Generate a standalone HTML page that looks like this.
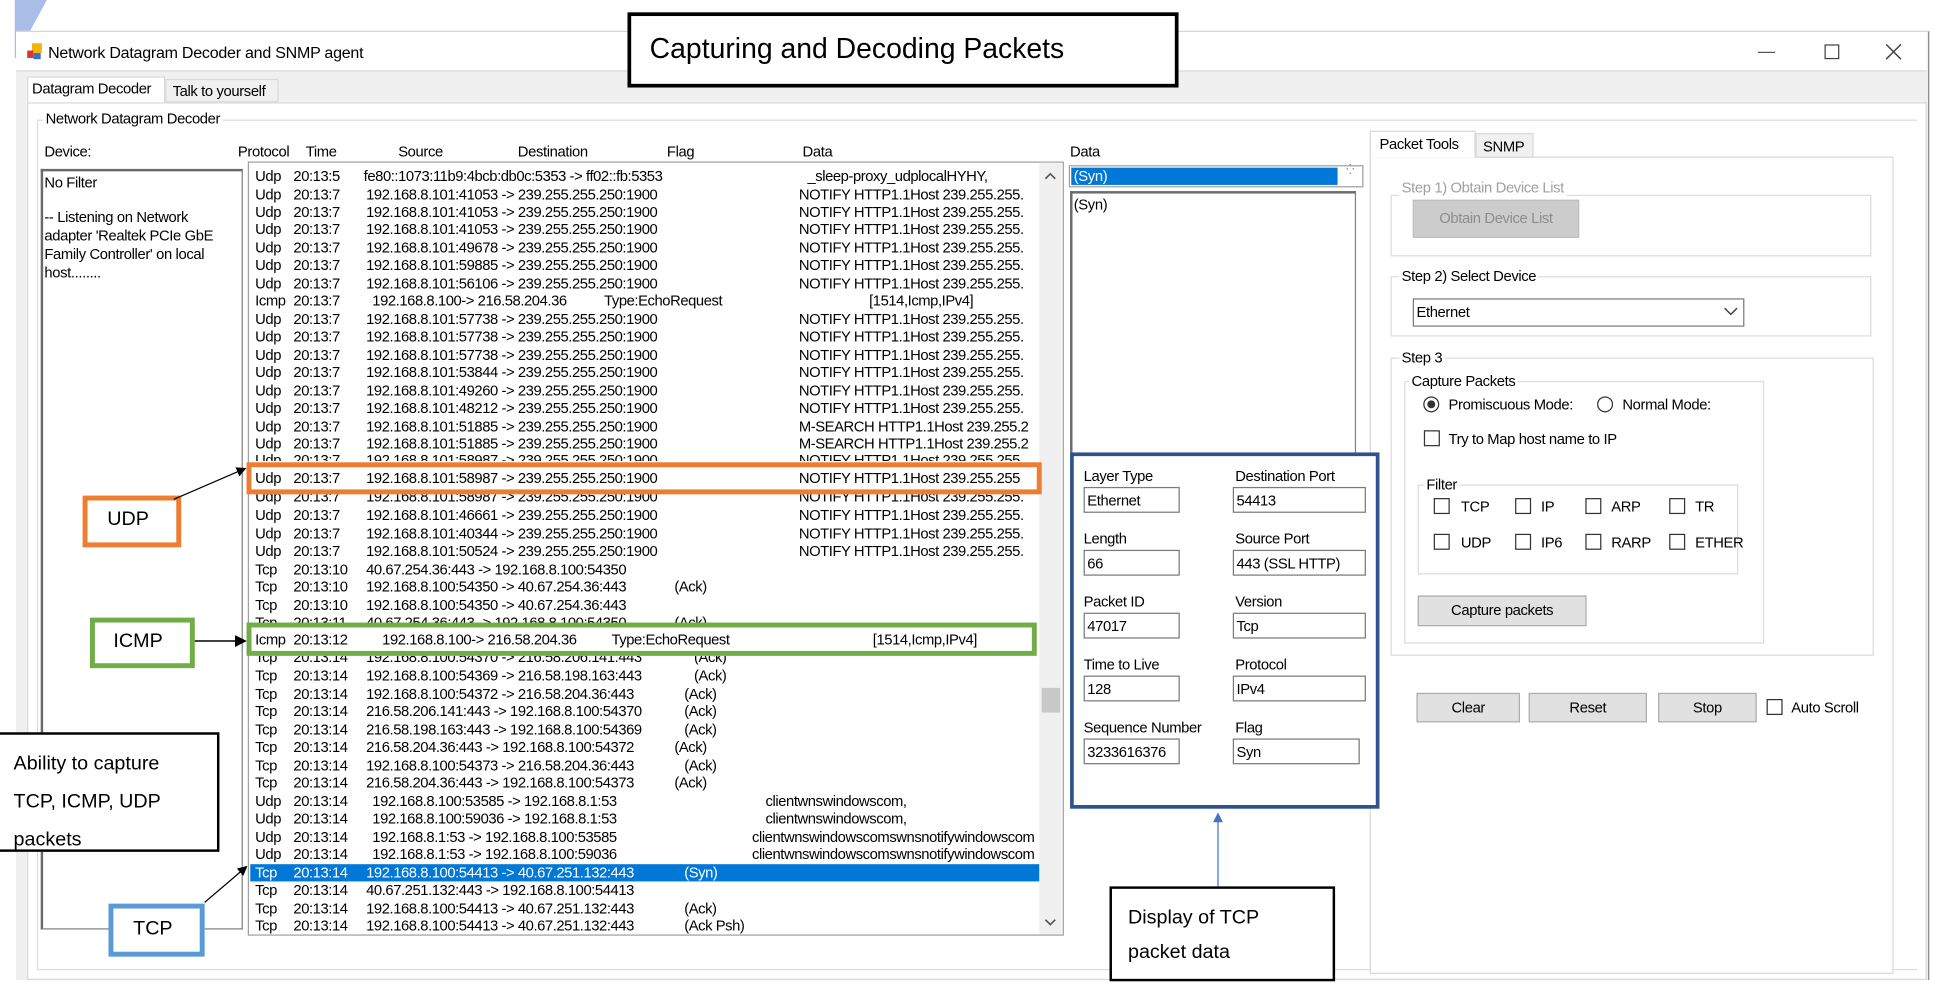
<!DOCTYPE html>
<html><head><meta charset="utf-8"><style>
*{margin:0;padding:0;box-sizing:border-box}
html,body{width:1933px;height:987px;overflow:hidden;background:#fff}
#s{position:absolute;left:0;top:0;width:1568px;height:801px;transform:scale(1.23278);transform-origin:0 0;font-family:"Liberation Sans",Arial,sans-serif;font-size:12px;color:#000}
.a{position:absolute}
.l{position:absolute;white-space:nowrap;font-size:12px;letter-spacing:-0.3px}
.gb{position:absolute;border:1px solid #dcdcdc}
.gl{position:absolute;background:#fff;padding:0 2px;white-space:nowrap;font-size:12px;letter-spacing:-0.3px}
.tb{position:absolute;border:1px solid #7a7a7a;background:#fff;font-size:12px;padding:3px 2px;letter-spacing:-0.3px;white-space:nowrap}
.btn{position:absolute;background:#e1e1e1;border:1px solid #adadad;text-align:center;font-size:12px;letter-spacing:-0.3px;white-space:nowrap}
.cb{position:absolute;width:13px;height:13px;border:1px solid #333;background:#fff}
.rw{position:absolute;left:203px;width:640px;height:14.5px;line-height:14px;font-size:12px;letter-spacing:-0.35px;white-space:nowrap}
.rw span{position:absolute;top:0}
.p{left:4px}.t{left:35px}.s{left:94px}.f{left:344px}.d{left:445px}
.sel{background:#0078d7;color:#fff}
.ann{position:absolute;background:#fff;font-family:"Liberation Sans",sans-serif;font-size:16px;white-space:nowrap}
</style></head><body><div id="s">

<svg class="a" style="left:0;top:0" width="60" height="60"><polygon points="12,0 38,0 12,48" fill="#a9bde8"/></svg>

<div class="a" style="left:13px;top:25px;width:1552px;height:770px;border-top:1px solid #d6d6d6;border-right:1px solid #888;background:#f0f0f0"></div>
<div class="a" style="left:13px;top:26px;width:1550px;height:32px;background:#fff;border-bottom:1px solid #d8d8d8"></div>
<svg class="a" style="left:22px;top:35px" width="13" height="14"><rect x="4" y="0" width="8" height="8" fill="#f2b600"/><rect x="0" y="6" width="5" height="6" fill="#d33"/><rect x="5" y="8" width="6" height="5" fill="#3a6fd0"/></svg>
<div class="l" style="left:39px;top:35px;font-size:13px;letter-spacing:-0.2px">Network Datagram Decoder and SNMP agent</div>
<div class="a" style="left:1426px;top:42px;width:14px;height:1px;background:#555"></div>
<div class="a" style="left:1480px;top:36px;width:12px;height:12px;border:1px solid #444"></div>
<svg class="a" style="left:1529px;top:35px" width="14" height="14"><path d="M1 1L13 13M13 1L1 13" stroke="#444" stroke-width="1.2"/></svg>

<div class="a" style="left:22px;top:62px;width:112px;height:22px;background:#fff;border:1px solid #d9d9d9;border-bottom:none"></div>
<div class="l" style="left:26px;top:65px">Datagram Decoder</div>
<div class="a" style="left:134px;top:64px;width:92px;height:19px;background:#f0f0f0;border:1px solid #d9d9d9"></div>
<div class="l" style="left:140px;top:67px">Talk to yourself</div>
<div class="a" style="left:22px;top:83px;width:1541px;height:712px;background:#fff;border:1px solid #d9d9d9"></div>

<div class="gb" style="left:30px;top:97px;width:1525px;height:690px;border-right:none"></div>
<div class="gl" style="left:35px;top:89px">Network Datagram Decoder</div>

<div class="l" style="left:36px;top:116px">Device:</div>
<div class="l" style="left:193px;top:116px">Protocol</div>
<div class="l" style="left:248px;top:116px">Time</div>
<div class="l" style="left:323px;top:116px">Source</div>
<div class="l" style="left:420px;top:116px">Destination</div>
<div class="l" style="left:541px;top:116px">Flag</div>
<div class="l" style="left:651px;top:116px">Data</div>
<div class="l" style="left:868px;top:116px">Data</div>

<!-- Right panel (before data panel so blue box overlays it) -->
<div class="a" style="left:1111px;top:127px;width:425px;height:663px;border:1px solid #d9d9d9;background:#fff"></div>
<div class="a" style="left:1111px;top:106px;width:86px;height:22px;background:#fff;border:1px solid #d9d9d9;border-bottom:none"></div>
<div class="l" style="left:1119px;top:110px">Packet Tools</div>
<div class="a" style="left:1197px;top:108px;width:47px;height:20px;background:#f0f0f0;border:1px solid #d9d9d9"></div>
<div class="l" style="left:1203px;top:112px">SNMP</div>

<div class="gb" style="left:1128px;top:158px;width:390px;height:50px"></div>
<div class="gl" style="left:1135px;top:145px;color:#a0a0a0">Step 1) Obtain Device List</div>
<div class="btn" style="left:1146px;top:162px;width:135px;height:31px;line-height:29px;color:#8d8d8d;background:#cccccc;border-color:#bfbfbf">Obtain Device List</div>

<div class="gb" style="left:1128px;top:224px;width:390px;height:49px"></div>
<div class="gl" style="left:1135px;top:217px">Step 2) Select Device</div>
<div class="tb" style="left:1146px;top:242px;width:269px;height:23px;border-color:#7a7a7a">Ethernet</div>
<svg class="a" style="left:1398px;top:249px" width="12" height="8"><path d="M1 1L6 6L11 1" stroke="#444" stroke-width="1.2" fill="none"/></svg>

<div class="gb" style="left:1128px;top:290px;width:392px;height:242px"></div>
<div class="gl" style="left:1135px;top:283px">Step 3</div>
<div class="gb" style="left:1139px;top:309px;width:292px;height:213px"></div>
<div class="gl" style="left:1143px;top:302px">Capture Packets</div>
<svg class="a" style="left:1154px;top:321px" width="14" height="14"><circle cx="7" cy="7" r="6" fill="#fff" stroke="#333"/><circle cx="7" cy="7" r="3.2" fill="#333"/></svg>
<div class="l" style="left:1175px;top:321px">Promiscuous Mode:</div>
<svg class="a" style="left:1295px;top:321px" width="14" height="14"><circle cx="7" cy="7" r="6" fill="#fff" stroke="#333"/></svg>
<div class="l" style="left:1316px;top:321px">Normal Mode:</div>
<div class="cb" style="left:1155px;top:349px"></div><div class="l" style="left:1175px;top:349px">Try to Map host name to IP</div>

<div class="gb" style="left:1150px;top:393px;width:260px;height:73px"></div>
<div class="gl" style="left:1155px;top:386px">Filter</div>
<div class="cb" style="left:1163px;top:404px"></div><div class="l" style="left:1185px;top:404px">TCP</div>
<div class="cb" style="left:1229px;top:404px"></div><div class="l" style="left:1250px;top:404px">IP</div>
<div class="cb" style="left:1286px;top:404px"></div><div class="l" style="left:1307px;top:404px">ARP</div>
<div class="cb" style="left:1354px;top:404px"></div><div class="l" style="left:1375px;top:404px">TR</div>
<div class="cb" style="left:1163px;top:433px"></div><div class="l" style="left:1185px;top:433px">UDP</div>
<div class="cb" style="left:1229px;top:433px"></div><div class="l" style="left:1250px;top:433px">IP6</div>
<div class="cb" style="left:1286px;top:433px"></div><div class="l" style="left:1307px;top:433px">RARP</div>
<div class="cb" style="left:1354px;top:433px"></div><div class="l" style="left:1375px;top:433px">ETHER</div>
<div class="btn" style="left:1150px;top:483px;width:137px;height:25px;line-height:23px">Capture packets</div>

<div class="btn" style="left:1149px;top:562px;width:84px;height:24px;line-height:22px">Clear</div>
<div class="btn" style="left:1240px;top:562px;width:96px;height:24px;line-height:22px">Reset</div>
<div class="btn" style="left:1345px;top:562px;width:80px;height:24px;line-height:22px">Stop</div>
<div class="cb" style="left:1433px;top:567px"></div><div class="l" style="left:1453px;top:567px">Auto Scroll</div>

<!-- device list -->
<div class="a" style="left:33px;top:137px;width:164px;height:617px;border:1px solid #828282;border-top:2px solid #6a6a6a;border-left:2px solid #6a6a6a;background:#fff"></div>
<div class="l" style="left:36px;top:141px">No Filter</div>
<div class="l" style="left:36px;top:169px;line-height:15px"> -- Listening on Network<br>adapter 'Realtek PCIe GbE<br>Family Controller' on local<br>host........</div>

<!-- packet list -->
<div class="a" style="left:201px;top:131px;width:662px;height:628px;border:1px solid #a0a0a0;background:#fff"></div>
<div class="a" style="left:843px;top:132px;width:18px;height:626px;background:#f0f0f0"></div>
<div class="a" style="left:845px;top:558px;width:15px;height:20px;background:#c8c8c8"></div>
<svg class="a" style="left:846px;top:138px" width="12" height="10"><path d="M2 7L6 3L10 7" stroke="#555" stroke-width="1.3" fill="none"/></svg>
<svg class="a" style="left:846px;top:743px" width="12" height="10"><path d="M2 3L6 7L10 3" stroke="#555" stroke-width="1.3" fill="none"/></svg>

<div class="rw" style="top:136px"><span class="p">Udp</span><span class="t">20:13:5</span><span class="s" style="left:92px">fe80::1073:11b9:4bcb:db0c:5353 -> ff02::fb:5353</span><span class="d" style="left:452px">_sleep-proxy_udplocalHYHY,</span></div>
<div class="rw" style="top:150.5px"><span class="p">Udp</span><span class="t">20:13:7</span><span class="s">192.168.8.101:41053 -> 239.255.255.250:1900</span><span class="d">NOTIFY  HTTP1.1Host 239.255.255.</span></div>
<div class="rw" style="top:165px"><span class="p">Udp</span><span class="t">20:13:7</span><span class="s">192.168.8.101:41053 -> 239.255.255.250:1900</span><span class="d">NOTIFY  HTTP1.1Host 239.255.255.</span></div>
<div class="rw" style="top:179.4px"><span class="p">Udp</span><span class="t">20:13:7</span><span class="s">192.168.8.101:41053 -> 239.255.255.250:1900</span><span class="d">NOTIFY  HTTP1.1Host 239.255.255.</span></div>
<div class="rw" style="top:193.9px"><span class="p">Udp</span><span class="t">20:13:7</span><span class="s">192.168.8.101:49678 -> 239.255.255.250:1900</span><span class="d">NOTIFY  HTTP1.1Host 239.255.255.</span></div>
<div class="rw" style="top:208.4px"><span class="p">Udp</span><span class="t">20:13:7</span><span class="s">192.168.8.101:59885 -> 239.255.255.250:1900</span><span class="d">NOTIFY  HTTP1.1Host 239.255.255.</span></div>
<div class="rw" style="top:222.9px"><span class="p">Udp</span><span class="t">20:13:7</span><span class="s">192.168.8.101:56106 -> 239.255.255.250:1900</span><span class="d">NOTIFY  HTTP1.1Host 239.255.255.</span></div>
<div class="rw" style="top:237.4px"><span class="p">Icmp</span><span class="t">20:13:7</span><span class="s" style="left:99px">192.168.8.100-> 216.58.204.36</span><span class="f" style="left:287px">Type:EchoRequest</span><span class="d" style="left:502px">[1514,Icmp,IPv4]</span></div>
<div class="rw" style="top:251.8px"><span class="p">Udp</span><span class="t">20:13:7</span><span class="s">192.168.8.101:57738 -> 239.255.255.250:1900</span><span class="d">NOTIFY  HTTP1.1Host 239.255.255.</span></div>
<div class="rw" style="top:266.3px"><span class="p">Udp</span><span class="t">20:13:7</span><span class="s">192.168.8.101:57738 -> 239.255.255.250:1900</span><span class="d">NOTIFY  HTTP1.1Host 239.255.255.</span></div>
<div class="rw" style="top:280.8px"><span class="p">Udp</span><span class="t">20:13:7</span><span class="s">192.168.8.101:57738 -> 239.255.255.250:1900</span><span class="d">NOTIFY  HTTP1.1Host 239.255.255.</span></div>
<div class="rw" style="top:295.3px"><span class="p">Udp</span><span class="t">20:13:7</span><span class="s">192.168.8.101:53844 -> 239.255.255.250:1900</span><span class="d">NOTIFY  HTTP1.1Host 239.255.255.</span></div>
<div class="rw" style="top:309.8px"><span class="p">Udp</span><span class="t">20:13:7</span><span class="s">192.168.8.101:49260 -> 239.255.255.250:1900</span><span class="d">NOTIFY  HTTP1.1Host 239.255.255.</span></div>
<div class="rw" style="top:324.2px"><span class="p">Udp</span><span class="t">20:13:7</span><span class="s">192.168.8.101:48212 -> 239.255.255.250:1900</span><span class="d">NOTIFY  HTTP1.1Host 239.255.255.</span></div>
<div class="rw" style="top:338.7px"><span class="p">Udp</span><span class="t">20:13:7</span><span class="s">192.168.8.101:51885 -> 239.255.255.250:1900</span><span class="d">M-SEARCH  HTTP1.1Host 239.255.2</span></div>
<div class="rw" style="top:353.2px"><span class="p">Udp</span><span class="t">20:13:7</span><span class="s">192.168.8.101:51885 -> 239.255.255.250:1900</span><span class="d">M-SEARCH  HTTP1.1Host 239.255.2</span></div>
<div class="rw" style="top:366px;height:8px;overflow:hidden"><span class="p">Udp</span><span class="t">20:13:7</span><span class="s">192.168.8.101:58987 -> 239.255.255.250:1900</span><span class="d">NOTIFY  HTTP1.1Host 239.255.255.</span></div>
<div class="rw" style="top:380.5px"><span class="p">Udp</span><span class="t">20:13:7</span><span class="s">192.168.8.101:58987 -> 239.255.255.250:1900</span><span class="d">NOTIFY  HTTP1.1Host 239.255.255</span></div>
<div class="rw" style="top:401px;height:9px;overflow:hidden"><div style="position:relative;top:-5px"><span class="p">Udp</span><span class="t">20:13:7</span><span class="s">192.168.8.101:58987 -> 239.255.255.250:1900</span><span class="d">NOTIFY  HTTP1.1Host 239.255.255.</span></div></div>
<div class="rw" style="top:411.1px"><span class="p">Udp</span><span class="t">20:13:7</span><span class="s">192.168.8.101:46661 -> 239.255.255.250:1900</span><span class="d">NOTIFY  HTTP1.1Host 239.255.255.</span></div>
<div class="rw" style="top:425.6px"><span class="p">Udp</span><span class="t">20:13:7</span><span class="s">192.168.8.101:40344 -> 239.255.255.250:1900</span><span class="d">NOTIFY  HTTP1.1Host 239.255.255.</span></div>
<div class="rw" style="top:440px"><span class="p">Udp</span><span class="t">20:13:7</span><span class="s">192.168.8.101:50524 -> 239.255.255.250:1900</span><span class="d">NOTIFY  HTTP1.1Host 239.255.255.</span></div>
<div class="rw" style="top:454.5px"><span class="p">Tcp</span><span class="t">20:13:10</span><span class="s">40.67.254.36:443 -> 192.168.8.100:54350</span></div>
<div class="rw" style="top:469px"><span class="p">Tcp</span><span class="t">20:13:10</span><span class="s">192.168.8.100:54350 -> 40.67.254.36:443</span><span class="f">(Ack)</span></div>
<div class="rw" style="top:483.5px"><span class="p">Tcp</span><span class="t">20:13:10</span><span class="s">192.168.8.100:54350 -> 40.67.254.36:443</span></div>
<div class="rw" style="top:498px;height:8px;overflow:hidden"><span class="p">Tcp</span><span class="t">20:13:11</span><span class="s">40.67.254.36:443 -> 192.168.8.100:54350</span><span class="f">(Ack)</span></div>
<div class="rw" style="top:512.4px"><span class="p">Icmp</span><span class="t">20:13:12</span><span class="s" style="left:107px">192.168.8.100-> 216.58.204.36</span><span class="f" style="left:293px">Type:EchoRequest</span><span class="d" style="left:505px">[1514,Icmp,IPv4]</span></div>
<div class="rw" style="top:532px;height:7px;overflow:hidden"><div style="position:relative;top:-6px"><span class="p">Tcp</span><span class="t">20:13:14</span><span class="s">192.168.8.100:54370 -> 216.58.206.141:443</span><span class="f" style="left:360px">(Ack)</span></div></div>
<div class="rw" style="top:541.4px"><span class="p">Tcp</span><span class="t">20:13:14</span><span class="s">192.168.8.100:54369 -> 216.58.198.163:443</span><span class="f" style="left:360px">(Ack)</span></div>
<div class="rw" style="top:555.9px"><span class="p">Tcp</span><span class="t">20:13:14</span><span class="s">192.168.8.100:54372 -> 216.58.204.36:443</span><span class="f" style="left:352px">(Ack)</span></div>
<div class="rw" style="top:570.4px"><span class="p">Tcp</span><span class="t">20:13:14</span><span class="s">216.58.206.141:443 -> 192.168.8.100:54370</span><span class="f" style="left:352px">(Ack)</span></div>
<div class="rw" style="top:584.8px"><span class="p">Tcp</span><span class="t">20:13:14</span><span class="s">216.58.198.163:443 -> 192.168.8.100:54369</span><span class="f" style="left:352px">(Ack)</span></div>
<div class="rw" style="top:599.3px"><span class="p">Tcp</span><span class="t">20:13:14</span><span class="s">216.58.204.36:443 -> 192.168.8.100:54372</span><span class="f">(Ack)</span></div>
<div class="rw" style="top:613.8px"><span class="p">Tcp</span><span class="t">20:13:14</span><span class="s">192.168.8.100:54373 -> 216.58.204.36:443</span><span class="f" style="left:352px">(Ack)</span></div>
<div class="rw" style="top:628.3px"><span class="p">Tcp</span><span class="t">20:13:14</span><span class="s">216.58.204.36:443 -> 192.168.8.100:54373</span><span class="f">(Ack)</span></div>
<div class="rw" style="top:642.8px"><span class="p">Udp</span><span class="t">20:13:14</span><span class="s" style="left:99px">192.168.8.100:53585 -> 192.168.8.1:53</span><span class="d" style="left:418px">clientwnswindowscom,</span></div>
<div class="rw" style="top:657.2px"><span class="p">Udp</span><span class="t">20:13:14</span><span class="s" style="left:99px">192.168.8.100:59036 -> 192.168.8.1:53</span><span class="d" style="left:418px">clientwnswindowscom,</span></div>
<div class="rw" style="top:671.7px;overflow:hidden"><span class="p">Udp</span><span class="t">20:13:14</span><span class="s" style="left:99px">192.168.8.1:53 -> 192.168.8.100:53585</span><span class="d" style="left:407px">clientwnswindowscomswnsnotifywindowscom</span></div>
<div class="rw" style="top:686.2px;overflow:hidden"><span class="p">Udp</span><span class="t">20:13:14</span><span class="s" style="left:99px">192.168.8.1:53 -> 192.168.8.100:59036</span><span class="d" style="left:407px">clientwnswindowscomswnsnotifywindowscom</span></div>
<div class="rw sel" style="top:700.7px"><span class="p">Tcp</span><span class="t">20:13:14</span><span class="s">192.168.8.100:54413 -> 40.67.251.132:443</span><span class="f" style="left:352px">(Syn)</span></div>
<div class="rw" style="top:715.2px"><span class="p">Tcp</span><span class="t">20:13:14</span><span class="s">40.67.251.132:443 -> 192.168.8.100:54413</span></div>
<div class="rw" style="top:729.6px"><span class="p">Tcp</span><span class="t">20:13:14</span><span class="s">192.168.8.100:54413 -> 40.67.251.132:443</span><span class="f" style="left:352px">(Ack)</span></div>
<div class="rw" style="top:744.1px"><span class="p">Tcp</span><span class="t">20:13:14</span><span class="s">192.168.8.100:54413 -> 40.67.251.132:443</span><span class="f" style="left:352px">(Ack Psh)</span></div>

<!-- Data combo/list -->
<div class="a" style="left:867px;top:134px;width:239px;height:18px;border:1px solid #a0a0a0;background:#fff"></div>
<div class="a" style="left:869px;top:136px;width:216px;height:14px;background:#0078d7"></div>
<div class="l" style="left:871px;top:136px;color:#fff;line-height:14px">(Syn)</div>
<div class="l" style="left:1092px;top:133px;font-size:8px;color:#555">⁛</div>
<div class="a" style="left:868px;top:155px;width:232px;height:215px;border:1px solid #828282;border-top:2px solid #6a6a6a;border-left:2px solid #6a6a6a;background:#fff"></div>
<div class="l" style="left:871px;top:159px">(Syn)</div>

<!-- Blue box fields -->
<div class="a" style="left:868px;top:367px;width:251px;height:289px;border:3px solid #2f528f;background:#fff"></div>
<div class="l" style="left:879px;top:379px">Layer Type</div><div class="l" style="left:1002px;top:379px">Destination Port</div>
<div class="tb" style="left:879px;top:395px;width:78px;height:21px">Ethernet</div><div class="tb" style="left:1000px;top:395px;width:108px;height:21px">54413</div>
<div class="l" style="left:879px;top:430px">Length</div><div class="l" style="left:1002px;top:430px">Source Port</div>
<div class="tb" style="left:879px;top:446px;width:78px;height:21px">66</div><div class="tb" style="left:1000px;top:446px;width:108px;height:21px">443 (SSL HTTP)</div>
<div class="l" style="left:879px;top:481px">Packet ID</div><div class="l" style="left:1002px;top:481px">Version</div>
<div class="tb" style="left:879px;top:497px;width:78px;height:21px">47017</div><div class="tb" style="left:1000px;top:497px;width:108px;height:21px">Tcp</div>
<div class="l" style="left:879px;top:532px">Time to Live</div><div class="l" style="left:1002px;top:532px">Protocol</div>
<div class="tb" style="left:879px;top:548px;width:78px;height:21px">128</div><div class="tb" style="left:1000px;top:548px;width:108px;height:21px">IPv4</div>
<div class="l" style="left:879px;top:583px">Sequence Number</div><div class="l" style="left:1002px;top:583px">Flag</div>
<div class="tb" style="left:879px;top:599px;width:78px;height:21px">3233616376</div><div class="tb" style="left:1000px;top:599px;width:103px;height:21px">Syn</div>

<!-- annotations -->
<div class="a" style="left:509px;top:10px;width:447px;height:61px;border:3px solid #000;background:#fff"></div>
<div class="ann" style="left:527px;top:26px;font-size:23px;background:none">Capturing and Decoding Packets</div>

<div class="a" style="left:200px;top:375px;width:645px;height:26px;border:4px solid #ed7d31"></div>
<div class="a" style="left:67px;top:402px;width:80px;height:42px;border:4px solid #ed7d31;background:#fff"></div>
<div class="ann" style="left:87px;top:413px;background:none">UDP</div>

<div class="a" style="left:200px;top:505px;width:641px;height:27px;border:4px solid #70ad47"></div>
<div class="a" style="left:73px;top:501px;width:85px;height:41px;border:4px solid #70ad47;background:#fff"></div>
<div class="ann" style="left:92px;top:512px;background:none">ICMP</div>

<div class="a" style="left:-2px;top:594px;width:180px;height:97px;border:2px solid #000;background:#fff"></div>
<div class="ann" style="left:11px;top:604px;line-height:31px;background:none">Ability to capture<br>TCP, ICMP, UDP<br>packets</div>

<div class="a" style="left:88px;top:733px;width:78px;height:43px;border:4px solid #5b9bd5;background:#fff"></div>
<div class="ann" style="left:108px;top:745px;background:none">TCP</div>

<div class="a" style="left:900px;top:719px;width:183px;height:77px;border:2px solid #000;background:#fff"></div>
<div class="ann" style="left:915px;top:731px;line-height:28px;background:none">Display of TCP<br>packet data</div>

<svg class="a" style="left:0;top:0" width="1568" height="801">
<defs><marker id="ar" markerWidth="8" markerHeight="8" refX="7" refY="4" orient="auto"><path d="M0,0L8,4L0,8z" fill="#000"/></marker>
<marker id="ab" markerWidth="8" markerHeight="8" refX="7" refY="4" orient="auto"><path d="M0,0L8,4L0,8z" fill="#4472c4"/></marker></defs>
<line x1="141" y1="405" x2="199" y2="380" stroke="#000" stroke-width="1" marker-end="url(#ar)"/>
<line x1="158" y1="520" x2="199" y2="520" stroke="#000" stroke-width="1.2" marker-end="url(#ar)"/>
<line x1="166" y1="732" x2="200" y2="703" stroke="#000" stroke-width="1" marker-end="url(#ar)"/>
<line x1="988" y1="719" x2="988" y2="660" stroke="#4472c4" stroke-width="1" marker-end="url(#ab)"/>
</svg>
</div></body></html>
